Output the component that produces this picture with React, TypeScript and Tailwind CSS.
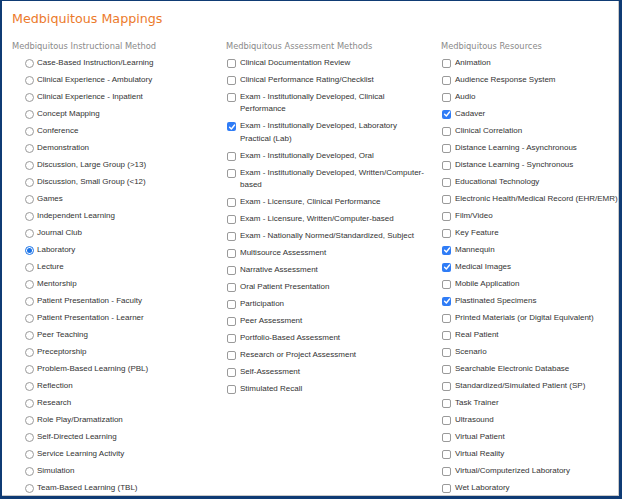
import React from "react";

const instructional = [
  "Case-Based Instruction/Learning",
  "Clinical Experience - Ambulatory",
  "Clinical Experience - Inpatient",
  "Concept Mapping",
  "Conference",
  "Demonstration",
  "Discussion, Large Group (>13)",
  "Discussion, Small Group (<12)",
  "Games",
  "Independent Learning",
  "Journal Club",
  "Laboratory",
  "Lecture",
  "Mentorship",
  "Patient Presentation - Faculty",
  "Patient Presentation - Learner",
  "Peer Teaching",
  "Preceptorship",
  "Problem-Based Learning (PBL)",
  "Reflection",
  "Research",
  "Role Play/Dramatization",
  "Self-Directed Learning",
  "Service Learning Activity",
  "Simulation",
  "Team-Based Learning (TBL)",
];

const assessment = [
  "Clinical Documentation Review",
  "Clinical Performance Rating/Checklist",
  "Exam - Institutionally Developed, Clinical Performance",
  "Exam - Institutionally Developed, Laboratory Practical (Lab)",
  "Exam - Institutionally Developed, Oral",
  "Exam - Institutionally Developed, Written/Computer-based",
  "Exam - Licensure, Clinical Performance",
  "Exam - Licensure, Written/Computer-based",
  "Exam - Nationally Normed/Standardized, Subject",
  "Multisource Assessment",
  "Narrative Assessment",
  "Oral Patient Presentation",
  "Participation",
  "Peer Assessment",
  "Portfolio-Based Assessment",
  "Research or Project Assessment",
  "Self-Assessment",
  "Stimulated Recall",
];

const resources = [
  "Animation",
  "Audience Response System",
  "Audio",
  "Cadaver",
  "Clinical Correlation",
  "Distance Learning - Asynchronous",
  "Distance Learning - Synchronous",
  "Educational Technology",
  "Electronic Health/Medical Record (EHR/EMR)",
  "Film/Video",
  "Key Feature",
  "Mannequin",
  "Medical Images",
  "Mobile Application",
  "Plastinated Specimens",
  "Printed Materials (or Digital Equivalent)",
  "Real Patient",
  "Scenario",
  "Searchable Electronic Database",
  "Standardized/Simulated Patient (SP)",
  "Task Trainer",
  "Ultrasound",
  "Virtual Patient",
  "Virtual Reality",
  "Virtual/Computerized Laboratory",
  "Wet Laboratory",
];

const checkedAssess = new Set(["Exam - Institutionally Developed, Laboratory Practical (Lab)"]);
const checkedRes = new Set(["Cadaver", "Mannequin", "Medical Images", "Plastinated Specimens"]);

function Radio({ checked }: { checked: boolean }) {
  return checked ? (
    <span className="mt-[1.75px] flex h-[9px] w-[9px] shrink-0 items-center justify-center rounded-full border border-[#1a73e8] bg-white">
      <span className="h-[5px] w-[5px] rounded-full bg-[#1a73e8]" />
    </span>
  ) : (
    <span className="mt-[1.75px] h-[9px] w-[9px] shrink-0 rounded-full border border-[#9a9a9a] bg-white" />
  );
}

function Check({ checked }: { checked: boolean }) {
  return checked ? (
    <span className="mt-[1.75px] flex h-[9px] w-[9px] shrink-0 items-center justify-center rounded-[2px] bg-[#2f7cf6]">
      <svg width="8" height="8" viewBox="0 0 10 10">
        <path d="M2 5.3 L4.2 7.4 L8.2 2.6" fill="none" stroke="white" strokeWidth="1.8" strokeLinecap="round" strokeLinejoin="round" />
      </svg>
    </span>
  ) : (
    <span className="mt-[1.75px] h-[9px] w-[9px] shrink-0 rounded-[2px] border border-[#9a9a9a] bg-white" />
  );
}

function Header({ children }: { children: React.ReactNode }) {
  return (
    <div className="text-[8.3px] leading-[12px] text-[#8a8a8a] [font-family:'DejaVu_Sans',sans-serif]">
      {children}
    </div>
  );
}

export default function App() {
  return (
    <div className="h-[499px] w-[622px] bg-[#0f3b74] pb-[3px] pl-[2px] pr-[3px] pt-px">
      <div className="h-full overflow-hidden border-b border-r border-[#c9c9c9] bg-white pl-[10px] pt-[10px]">
        <div className="text-[12.7px] leading-[16px] text-[#ec7a2c] [font-family:'DejaVu_Sans',sans-serif]">
          Medbiquitous Mappings
        </div>
        <div className="mt-[13px] grid grid-cols-[214px_215px_1fr] text-[8px] text-[#333] [font-family:'Liberation_Sans',Arial,sans-serif]">
          <div>
            <Header>Medbiquitous Instructional Method</Header>
            <div className="mt-[2.5px] flex flex-col">
              {instructional.map((t) => (
                <div key={t} className="flex items-start gap-[3px] py-[2.25px] pl-[13px] leading-[12.5px]">
                  <Radio checked={t === "Laboratory"} />
                  <span>{t}</span>
                </div>
              ))}
            </div>
          </div>
          <div className="pr-[14px]">
            <Header>Medbiquitous Assessment Methods</Header>
            <div className="mt-[2.5px] flex flex-col">
              {assessment.map((t) => (
                <div key={t} className="flex items-start gap-[4px] py-[2.25px] pl-px leading-[12.5px]">
                  <Check checked={checkedAssess.has(t)} />
                  <span>{t}</span>
                </div>
              ))}
            </div>
          </div>
          <div>
            <Header>Medbiquitous Resources</Header>
            <div className="mt-[2.5px] flex flex-col">
              {resources.map((t) => (
                <div key={t} className="flex items-start gap-[4px] py-[2.25px] pl-px leading-[12.5px]">
                  <Check checked={checkedRes.has(t)} />
                  <span className="whitespace-nowrap">{t}</span>
                </div>
              ))}
            </div>
          </div>
        </div>
      </div>
    </div>
  );
}
